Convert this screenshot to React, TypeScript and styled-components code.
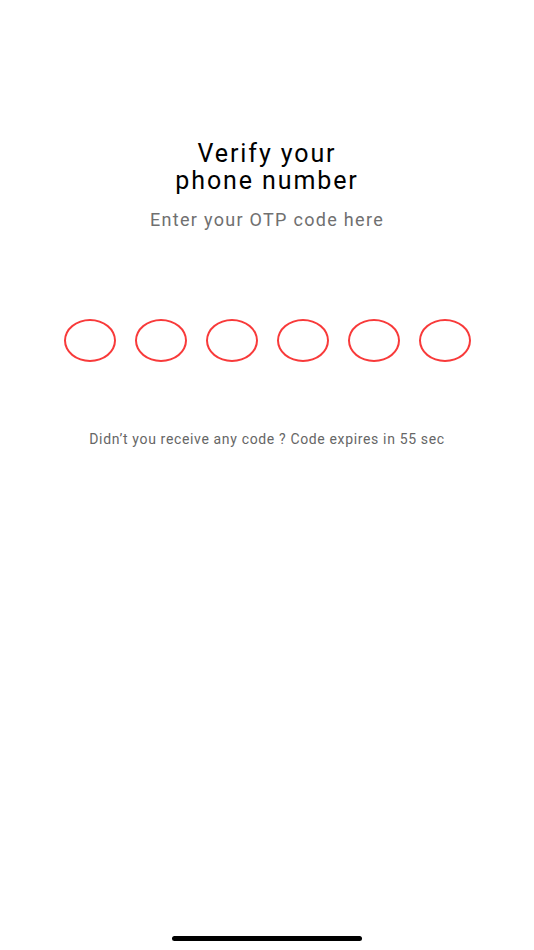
import { FC } from 'react';
import styled, { createGlobalStyle } from 'styled-components';

const GlobalStyle = createGlobalStyle`
  html, body {
    margin: 0;
    padding: 0;
    background: #ffffff;
  }
  body {
    font-family: 'Roboto', 'Liberation Sans', sans-serif;
  }
`;

const CODE_LENGTH = 6;

const App: FC = () => {
  return (
    <>
      <GlobalStyle />
      <Screen>
        <Content>
          <Title>
            Verify your
            <br />
            phone number
          </Title>
          <SubTitle>Enter your OTP code here</SubTitle>
          <CodeRow>
            {Array.from({ length: CODE_LENGTH }).map((_, i) => (
              <CodeCell key={i} />
            ))}
          </CodeRow>
          <ResendText>
            Didn’t you receive any code ? Code expires in 55 sec
          </ResendText>
        </Content>
        <HomeIndicator />
      </Screen>
    </>
  );
};

export default App;

const Screen = styled.div`
  width: 534px;
  height: 950px;
  display: flex;
  flex-direction: column;
  align-items: center;
  background: #ffffff;
`;

const Content = styled.div`
  flex: 1;
  display: flex;
  flex-direction: column;
  align-items: center;
  padding-top: 140px;
`;

const Title = styled.h1`
  margin: 0;
  font-family: 'Roboto', 'Liberation Sans', sans-serif;
  font-weight: 400;
  font-size: 25px;
  line-height: 27px;
  letter-spacing: 1.9px;
  text-align: center;
  color: #000000;
`;

const SubTitle = styled.div`
  margin-top: 15px;
  font-family: 'Roboto', 'Liberation Sans', sans-serif;
  font-weight: 400;
  font-size: 18px;
  line-height: 21px;
  letter-spacing: 1.3px;
  color: #707070;
`;

const CodeRow = styled.div`
  margin-top: 89px;
  display: flex;
  gap: 19px;
`;

const CodeCell = styled.div`
  box-sizing: border-box;
  width: 52px;
  height: 43px;
  border: 2.5px solid #f83a3a;
  border-radius: 50%;
`;

const ResendText = styled.div`
  margin-top: 69px;
  font-family: 'Roboto', 'Liberation Sans', sans-serif;
  font-weight: 400;
  font-size: 14px;
  line-height: 16px;
  letter-spacing: 0.65px;
  color: #666666;
`;

const HomeIndicator = styled.div`
  width: 190px;
  height: 5px;
  margin-bottom: 9px;
  border-radius: 3px;
  background: #000000;
`;
